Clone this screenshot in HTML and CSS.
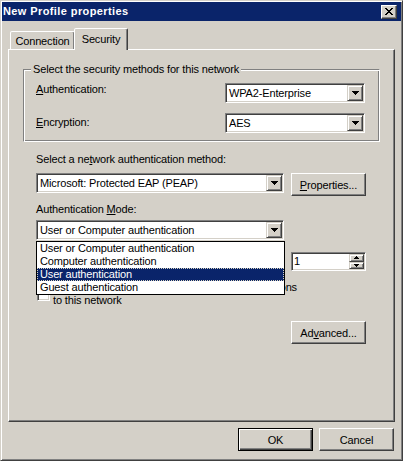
FILE: index.html
```html
<!DOCTYPE html>
<html lang="en">
<head>
<meta charset="UTF-8" />
<meta name="viewport" content="width=device-width, initial-scale=1" />
<title>New Profile properties</title>
<link rel="stylesheet" href="styles.css">
</head>
<body>

<div class="window">
  <div class="titlebar">
    <span class="title">New Profile properties</span>
    <button class="close-btn" aria-label="Close">
      <svg width="8" height="7" viewBox="0 0 8 7"><path d="M0 0h2v1H0z M6 0h2v1H6z M1 1h2v1H1z M5 1h2v1H5z M2 2h4v1H2z M3 3h2v1H3z M2 4h4v1H2z M1 5h2v1H1z M5 5h2v1H5z M0 6h2v1H0z M6 6h2v1H6z" fill="#000"/></svg>
    </button>
  </div>

  <div class="tabs">
    <div class="tab tab-conn">Connection</div>
    <div class="tab active">Security</div>
  </div>

  <div class="panel">
    <div class="group">
      <span class="legend">Select the security methods for this network</span>
      <div class="field-row">
        <span class="field-label"><u>A</u>uthentication:</span>
        <div class="combo combo-short">
          <span class="combo-text">WPA2-Enterprise</span>
          <span class="drop-btn"><svg width="7" height="4" viewBox="0 0 7 4"><path d="M0 0h7v1H0z M1 1h5v1H1z M2 2h3v1H2z M3 3h1v1H3z" fill="#000"/></svg></span>
        </div>
      </div>
      <div class="field-row">
        <span class="field-label enc"><u>E</u>ncryption:</span>
        <div class="combo combo-short">
          <span class="combo-text">AES</span>
          <span class="drop-btn"><svg width="7" height="4" viewBox="0 0 7 4"><path d="M0 0h7v1H0z M1 1h5v1H1z M2 2h3v1H2z M3 3h1v1H3z" fill="#000"/></svg></span>
        </div>
      </div>
    </div>

    <div class="section-label">Select a ne<u>t</u>work authentication method:</div>
    <div class="method-row">
      <div class="combo combo-wide">
        <span class="combo-text">Microsoft: Protected EAP (PEAP)</span>
        <span class="drop-btn"><svg width="7" height="4" viewBox="0 0 7 4"><path d="M0 0h7v1H0z M1 1h5v1H1z M2 2h3v1H2z M3 3h1v1H3z" fill="#000"/></svg></span>
      </div>
      <button class="btn"><u>P</u>roperties...</button>
    </div>

    <div class="section-label mode-label">Authentication <u>M</u>ode:</div>
    <div class="mode-wrap">
      <div class="combo combo-wide">
        <span class="combo-text">User or Computer authentication</span>
        <span class="drop-btn"><svg width="7" height="4" viewBox="0 0 7 4"><path d="M0 0h7v1H0z M1 1h5v1H1z M2 2h3v1H2z M3 3h1v1H3z" fill="#000"/></svg></span>
      </div>
      <ul class="drop-list">
        <li>User or Computer authentication</li>
        <li>Computer authentication</li>
        <li class="selected">User authentication</li>
        <li>Guest authentication</li>
      </ul>
    </div>

    <!-- label for the spin box sits under the open list -->
    <div class="spin-row">
      <span class="field-label"></span>
      <div class="spin">
        <span class="spin-text">1</span>
        <span class="spin-btns">
          <span><svg width="5" height="3" viewBox="0 0 5 3"><path d="M2 0h1v1H2z M1 1h3v1H1z M0 2h5v1H0z" fill="#000"/></svg></span>
          <span><svg width="5" height="3" viewBox="0 0 5 3"><path d="M0 0h5v1H0z M1 1h3v1H1z M2 2h1v1H2z" fill="#000"/></svg></span>
        </span>
      </div>
    </div>

    <div class="check-row">
      <span class="checkbox"></span>
      <span class="check-label">Cache user information for subsequent connections to this network</span>
    </div>

    <div class="advanced-row">
      <button class="btn">Ad<u>v</u>anced...</button>
    </div>
  </div>

  <div class="footer">
    <button class="btn default">OK</button>
    <button class="btn">Cancel</button>
  </div>
</div>

</body>
</html>
```

FILE: styles.css
```css
* {
  box-sizing: border-box;
}

body {
  margin: 0;
  background: #d4d0c8;
  font-family: "Liberation Sans", Arial, sans-serif;
  font-size: 11px;
  letter-spacing: -0.15px;
  color: #000;
}

u {
  text-decoration-thickness: 1px;
}

.window {
  width: 403px;
  height: 461px;
  padding: 1px;
  background: #d4d0c8;
  border: 1px solid;
  border-color: #d4d0c8 #404040 #404040 #d4d0c8;
  box-shadow: inset 1px 1px #fff, inset -1px -1px #808080;
}

/* title bar */
.titlebar {
  height: 19px;
  display: flex;
  align-items: center;
  justify-content: space-between;
  padding: 0 4px 0 1px;
  background: #0a246a;
}

.title {
  color: #fff;
  font-weight: bold;
  letter-spacing: 0.4px;
  line-height: 19px;
}

.close-btn {
  width: 16px;
  height: 14px;
  padding: 0;
  display: flex;
  align-items: center;
  justify-content: center;
  background: #d4d0c8;
  border: 1px solid;
  border-color: #fff #404040 #404040 #fff;
  box-shadow: inset -1px -1px #808080;
}

/* tabs */
.tabs {
  height: 28px;
  display: flex;
  align-items: flex-end;
  padding-left: 8px;
}

.tab {
  height: 18px;
  padding-top: 3px;
  line-height: 13px;
  text-align: center;
  background: #d4d0c8;
  border: 1px solid;
  border-bottom: none;
  border-color: #fff #404040 transparent #fff;
  border-radius: 2px 2px 0 0;
  box-shadow: inset -1px 0 #808080;
}

.tab-conn {
  width: 65px;
}

.tab.active {
  width: 54px;
  height: 22px;
  padding-top: 4px;
  margin-left: -1px;
  margin-bottom: -1px;
  position: relative;
  z-index: 1;
}

/* panel */
.panel {
  width: 387px;
  height: 373px;
  margin-left: 6px;
  padding: 0 28px 0 27px;
  border: 1px solid;
  border-color: #fff #404040 #404040 #fff;
  box-shadow: inset -1px -1px #808080;
}

.group {
  position: relative;
  margin: 19px -14px 0 -13px;
  padding: 13px 14px 8px 12px;
  display: flex;
  flex-direction: column;
  gap: 10px;
  border: 1px solid;
  border-color: #808080 #fff #fff #808080;
  box-shadow: inset 1px 1px #fff, inset -1px -1px #808080;
}

.legend {
  position: absolute;
  top: -7px;
  left: 7px;
  padding: 0 2px;
  line-height: 13px;
  background: #d4d0c8;
}

.field-row {
  display: flex;
  justify-content: space-between;
  align-items: flex-start;
}

.field-label {
  line-height: 13px;
}

.field-label.enc {
  margin-top: 3px;
}

/* combo boxes */
.combo {
  height: 20px;
  display: flex;
  padding: 1px;
  background: #fff;
  border: 1px solid;
  border-color: #808080 #fff #fff #808080;
  box-shadow: inset 1px 1px #404040, inset -1px -1px #d4d0c8;
}

.combo-short {
  width: 140px;
}

.combo-wide {
  width: 248px;
}

.combo-text {
  flex: 1;
  padding-left: 2px;
  line-height: 16px;
  white-space: nowrap;
  overflow: hidden;
}

.drop-btn {
  width: 16px;
  height: 16px;
  display: flex;
  align-items: center;
  justify-content: center;
  background: #d4d0c8;
  border: 1px solid;
  border-color: #d4d0c8 #404040 #404040 #d4d0c8;
  box-shadow: inset 1px 1px #fff, inset -1px -1px #808080;
}

.section-label {
  margin-top: 11px;
  line-height: 13px;
}

.method-row {
  margin-top: 7px;
  display: flex;
  justify-content: space-between;
  align-items: flex-start;
}

.mode-label {
  margin-top: 7px;
}

.mode-wrap {
  position: relative;
  margin-top: 4px;
}

.drop-list {
  position: absolute;
  top: 21px;
  left: 0;
  z-index: 5;
  width: 249px;
  margin: 0;
  padding: 0;
  list-style: none;
  background: #fff;
  border: 1px solid #000;
}

.drop-list li {
  height: 13px;
  padding-left: 3px;
  line-height: 13px;
  white-space: nowrap;
}

.drop-list li.selected {
  background: #0a246a;
  color: #fff;
  outline: 1px dotted #d8d4c0;
  outline-offset: -1px;
}

/* spin */
.spin-row {
  margin-top: 12px;
  display: flex;
  justify-content: space-between;
  align-items: center;
}

.spin {
  width: 75px;
  height: 19px;
  display: flex;
  padding: 1px;
  background: #fff;
  border: 1px solid;
  border-color: #808080 #fff #fff #808080;
  box-shadow: inset 1px 1px #404040, inset -1px -1px #d4d0c8;
}

.spin-text {
  flex: 1;
  padding-left: 1px;
  line-height: 15px;
}

.spin-btns {
  width: 15px;
  display: flex;
  flex-direction: column;
}

.spin-btns span {
  flex: 1;
  display: flex;
  align-items: center;
  justify-content: center;
  background: #d4d0c8;
  border: 1px solid;
  border-color: #d4d0c8 #404040 #404040 #d4d0c8;
  box-shadow: inset 1px 1px #fff, inset -1px -1px #808080;
}

/* checkbox */
.check-row {
  margin-top: 10px;
  padding-left: 1px;
  display: flex;
  align-items: center;
}

.checkbox {
  width: 13px;
  height: 13px;
  flex-shrink: 0;
  background: #fff;
  border: 1px solid;
  border-color: #808080 #fff #fff #808080;
  box-shadow: inset 1px 1px #404040, inset -1px -1px #d4d0c8;
}

.check-label {
  width: 250px;
  margin-left: 3px;
  line-height: 13px;
}

.advanced-row {
  margin-top: 14px;
  display: flex;
  justify-content: flex-end;
}

/* buttons */
.btn {
  width: 75px;
  height: 23px;
  padding: 0;
  font: inherit;
  letter-spacing: inherit;
  color: #000;
  background: #d4d0c8;
  border: 1px solid;
  border-color: #fff #404040 #404040 #fff;
  box-shadow: inset -1px -1px #808080;
}

.btn.default {
  border-color: #000;
  box-shadow: inset 1px 1px #fff, inset -1px -1px #404040, inset -2px -2px #808080;
}

.footer {
  margin-top: 6px;
  padding-right: 7px;
  display: flex;
  justify-content: flex-end;
  gap: 6px;
}
```
